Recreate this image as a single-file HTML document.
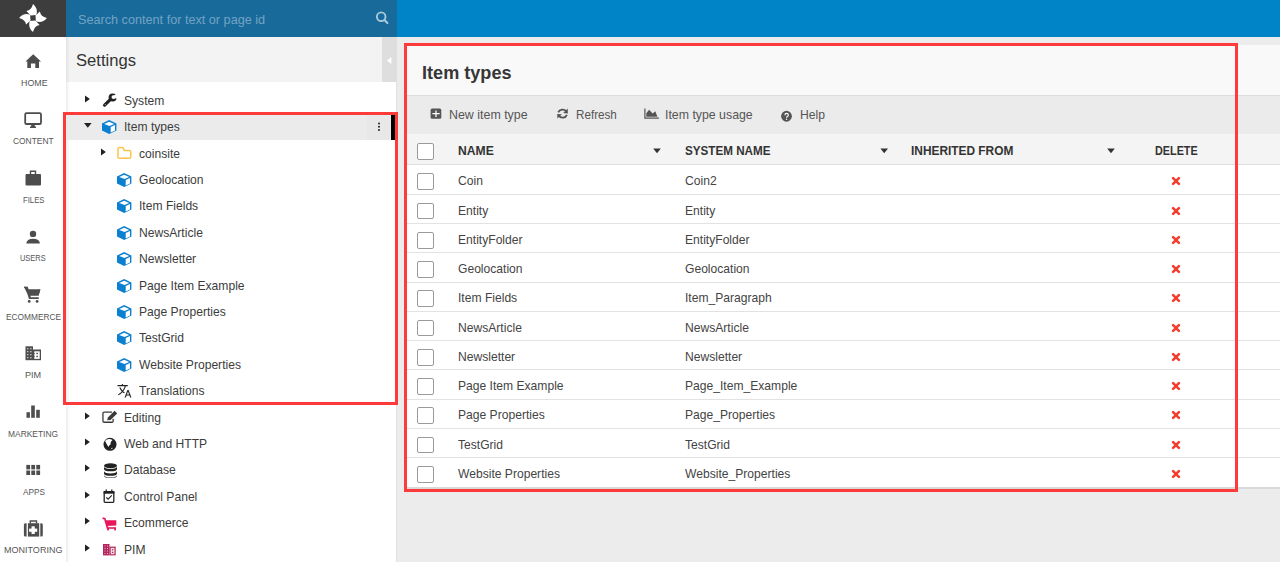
<!DOCTYPE html>
<html><head><meta charset="utf-8">
<style>
*{margin:0;padding:0;box-sizing:border-box}
html,body{width:1280px;height:562px;overflow:hidden;background:#ececec;font-family:"Liberation Sans",sans-serif;color:#333}
.a{position:absolute}
.t{position:absolute;white-space:nowrap;line-height:1}
svg{position:absolute;overflow:visible}
</style></head><body>
<div class="a" style="left:0px;top:0px;width:66px;height:37px;background:#3d3d3d;"></div>
<div class="a" style="left:66px;top:0px;width:331px;height:37px;background:#186a9b;"></div>
<div class="a" style="left:397px;top:0px;width:883px;height:37px;background:#0084c8;"></div>
<div class="t" style="left:78.40px;top:13.43px;font-size:13.2px;color:#73a3c3;transform-origin:0 0;transform:scaleX(0.9595);">Search content for text or page id</div>
<svg width="1" height="1" style="left:33px;top:17.6px"><g fill="#fff" transform="rotate(0)"><path d="M-6.6,-6.9 Q-1.6,-7.6 0,-13.9 Q5.4,-9.6 3.3,-2.9 L-2.4,-2.5 Z" transform="rotate(0)"/><path d="M-6.6,-6.9 Q-1.6,-7.6 0,-13.9 Q5.4,-9.6 3.3,-2.9 L-2.4,-2.5 Z" transform="rotate(90)"/><path d="M-6.6,-6.9 Q-1.6,-7.6 0,-13.9 Q5.4,-9.6 3.3,-2.9 L-2.4,-2.5 Z" transform="rotate(180)"/><path d="M-6.6,-6.9 Q-1.6,-7.6 0,-13.9 Q5.4,-9.6 3.3,-2.9 L-2.4,-2.5 Z" transform="rotate(270)"/></g></svg>
<svg width="1" height="1" style="left:0;top:0"><circle cx="381.2" cy="16.7" r="4.3" fill="none" stroke="#a9c8dc" stroke-width="1.9"/><path d="M384.5,20 L387.4,22.9" stroke="#a9c8dc" stroke-width="2.1" stroke-linecap="round"/></svg>
<div class="a" style="left:0px;top:37px;width:66px;height:525px;background:#fff;"></div>
<div class="t" style="left:20.60px;top:77.74px;font-size:9.4px;color:#555;transform-origin:0 0;transform:scaleX(0.9433);">HOME</div>
<div class="t" style="left:13.10px;top:136.20px;font-size:9.4px;color:#555;transform-origin:0 0;transform:scaleX(0.8977);">CONTENT</div>
<div class="t" style="left:23.10px;top:194.66px;font-size:9.4px;color:#555;transform-origin:0 0;transform:scaleX(0.8238);">FILES</div>
<div class="t" style="left:20.40px;top:253.12px;font-size:9.4px;color:#555;transform-origin:0 0;transform:scaleX(0.7932);">USERS</div>
<div class="t" style="left:6.10px;top:311.58px;font-size:9.4px;color:#555;transform-origin:0 0;transform:scaleX(0.8882);">ECOMMERCE</div>
<div class="t" style="left:25.00px;top:370.04px;font-size:9.4px;color:#555;transform-origin:0 0;transform:scaleX(0.9701);">PIM</div>
<div class="t" style="left:8.00px;top:428.50px;font-size:9.4px;color:#555;transform-origin:0 0;transform:scaleX(0.8980);">MARKETING</div>
<div class="t" style="left:22.70px;top:486.96px;font-size:9.4px;color:#555;transform-origin:0 0;transform:scaleX(0.8805);">APPS</div>
<div class="t" style="left:4.40px;top:545.42px;font-size:9.4px;color:#555;transform-origin:0 0;transform:scaleX(0.9614);">MONITORING</div>
<svg width="1" height="1" style="left:0;top:0"><path d="M33.2,54.3 L41,61.6 L39,61.6 L39,68 L35.3,68 L35.3,63.5 L30.9,63.5 L30.9,68 L27.3,68 L27.3,61.6 L25.5,61.6 Z" fill="#4d4d4d"/></svg>
<svg width="1" height="1" style="left:0;top:0"><rect x="25.2" y="113.1" width="15.8" height="10.9" rx="1.3" fill="none" stroke="#4d4d4d" stroke-width="1.8"/><path d="M31.2,124.5 L34.8,124.5 L34.8,126.6 L36,126.6 L36,128 L30,128 L30,126.6 L31.2,126.6 Z" fill="#4d4d4d"/></svg>
<svg width="1" height="1" style="left:0;top:0"><rect x="25.5" y="174" width="15.5" height="11.6" rx="1" fill="#4d4d4d"/><path d="M30.5,174.5 L30.5,171.2 L35.5,171.2 L35.5,174.5" fill="none" stroke="#4d4d4d" stroke-width="1.4"/></svg>
<svg width="1" height="1" style="left:0;top:0"><circle cx="33" cy="233.9" r="3.2" fill="#4d4d4d"/><path d="M26.3,243.6 Q26.6,238.8 33.1,238.8 Q39.6,238.8 39.9,243.6 Z" fill="#4d4d4d"/></svg>
<svg width="1" height="1" style="left:0;top:0"><path d="M24.1,287 L27.2,287.4 L28.6,292 L40.4,289.4 L38.6,295.6 L29.6,295.6 L30.2,297.3 L38.8,297.3 L38.8,299 L29,299 L27.4,294 Z" fill="#4d4d4d"/><path d="M24.1,287.2 L27.2,287.6 L30.1,297.5" fill="none" stroke="#4d4d4d" stroke-width="1.6"/><path d="M27.6,289.3 L40.4,289.3 L38.6,295.6 L29.4,295.6 Z" fill="#4d4d4d"/><circle cx="29.2" cy="301.4" r="1.4" fill="#4d4d4d"/><circle cx="37.1" cy="301.4" r="1.4" fill="#4d4d4d"/></svg>
<svg width="1" height="1" style="left:0;top:0"><rect x="25.5" y="346.3" width="7.5" height="13.9" fill="#4d4d4d"/><rect x="33" y="349.5" width="8" height="10.7" fill="#4d4d4d"/><rect x="34.3" y="351.3" width="5.4" height="7.6" fill="#fff"/><g fill="#ccc"><rect x="27.1" y="348" width="1.3" height="1.3"/><rect x="30.2" y="348" width="1.3" height="1.3"/><rect x="27.1" y="351" width="1.3" height="1.3"/><rect x="30.2" y="351" width="1.3" height="1.3"/><rect x="27.1" y="354" width="1.3" height="1.3"/><rect x="30.2" y="354" width="1.3" height="1.3"/><rect x="27.1" y="357" width="1.3" height="1.3"/><rect x="30.2" y="357" width="1.3" height="1.3"/></g><g fill="#4d4d4d"><rect x="36.4" y="352.7" width="1.5" height="1.5"/><rect x="36.4" y="355.7" width="1.5" height="1.5"/><rect x="33" y="353" width="1.6" height="0.9"/><rect x="33" y="356" width="1.6" height="0.9"/></g></svg>
<svg width="1" height="1" style="left:0;top:0"><g fill="#4d4d4d"><rect x="26.5" y="412.2" width="3.4" height="5.6"/><rect x="31.2" y="405.5" width="3.6" height="12.3"/><rect x="36.2" y="409.8" width="3.6" height="8"/></g></svg>
<svg width="1" height="1" style="left:0;top:0"><g fill="#4d4d4d"><rect x="26.3" y="464.9" width="3.8" height="4.5"/><rect x="31.3" y="464.9" width="3.8" height="4.5"/><rect x="36.3" y="464.9" width="3.8" height="4.5"/><rect x="26.3" y="470.5" width="3.8" height="4.5"/><rect x="31.3" y="470.5" width="3.8" height="4.5"/><rect x="36.3" y="470.5" width="3.8" height="4.5"/></g></svg>
<svg width="1" height="1" style="left:0;top:0"><g fill="#4d4d4d"><path d="M26.6,523.2 L25.4,523.2 Q23.9,523.2 23.9,524.7 L23.9,535.1 Q23.9,536.6 25.4,536.6 L26.6,536.6 Z"/><path d="M40.3,523.2 L41.3,523.2 Q42.8,523.2 42.8,524.7 L42.8,535.1 Q42.8,536.6 41.3,536.6 L40.3,536.6 Z"/><rect x="27.9" y="523.2" width="11.3" height="13.4"/><path d="M29.6,523.3 L29.6,520.3 L37.2,520.3 L37.2,523.3 L35.8,523.3 L35.8,521.7 L31,521.7 L31,523.3 Z"/></g><g fill="#fff"><rect x="29.1" y="528.6" width="8.1" height="3.2"/><rect x="31.55" y="526.3" width="3.2" height="7.7"/></g></svg>
<div class="a" style="left:66px;top:37px;width:331px;height:45px;background:#f3f3f3;"></div>
<div class="a" style="left:382px;top:37px;width:15px;height:45px;background:#dedede;"></div>
<svg width="1" height="1" style="left:0;top:0"><path d="M391.4,57.1 L391.4,64.1 L386.9,60.6 Z" fill="#fff"/></svg>
<div class="a" style="left:66px;top:82px;width:330px;height:480px;background:#fff;"></div>
<div class="a" style="left:396px;top:82px;width:1px;height:480px;background:#e0e0e0;"></div>
<div class="a" style="left:66px;top:37px;width:4px;height:525px;background:linear-gradient(to right,rgba(0,0,0,0.07),rgba(0,0,0,0));"></div>
<div class="t" style="left:75.80px;top:52.47px;font-size:17.4px;color:#333;transform-origin:0 0;transform:scaleX(0.9547);">Settings</div>
<div class="a" style="left:66px;top:113.2px;width:330px;height:26.6px;background:#ebebeb;"></div>
<div class="a" style="left:367px;top:113.2px;width:24px;height:26.6px;background:#e8e8e8;"></div>
<div class="a" style="left:391px;top:113px;width:4px;height:27px;background:#000;"></div>
<svg width="1" height="1" style="left:0;top:0"><g fill="#222"><circle cx="379" cy="123.6" r="1"/><circle cx="379" cy="126.8" r="1"/><circle cx="379" cy="130" r="1"/></g></svg>
<div class="t" style="left:123.50px;top:94.86px;font-size:12.8px;color:#3c3c3c;transform-origin:0 0;transform:scaleX(0.9453);">System</div>
<svg width="1" height="1" style="left:85.4px;top:98.8px"><path d="M0,-3.6 L4.9,0 L0,3.6 Z" fill="#222"/></svg>
<svg width="1" height="1" style="left:102px;top:100.8px"><path d="M2.6,4.1 L8,-1.2" stroke="#222" stroke-width="3.2" stroke-linecap="round"/><circle cx="10.6" cy="-3.6" r="4" fill="#222"/><circle cx="11.4" cy="-3.9" r="1.9" fill="#fff"/><path d="M11.4,-5.3 L15.5,-7.4 L15.5,-2.8 L11.4,-2.5 Z" fill="#fff"/><circle cx="3.3" cy="3.6" r="0.55" fill="#bbb"/></svg>
<div class="t" style="left:123.50px;top:121.26px;font-size:12.8px;color:#3c3c3c;transform-origin:0 0;transform:scaleX(0.9453);">Item types</div>
<svg width="1" height="1" style="left:84.4px;top:122.69999999999999px"><path d="M0,0 L7.6,0 L3.8,4.7 Z" fill="#222"/></svg>
<svg width="1" height="1" style="left:102px;top:127.19999999999999px"><g transform="translate(7.2,0)"><path d="M0,-6.9 L7.2,-3.6 L7.2,3.6 L0,6.9 L-7.2,3.6 L-7.2,-3.6 Z" fill="#0b7fd0"/><path d="M0,-5.3 L5,-3.1 L0.3,-1.1 L-5,-3.1 Z" fill="#fff"/><path d="M1.5,0 L5.8,-2 L5.8,3.4 L1.5,5.5 Z" fill="#fff"/></g></svg>
<div class="t" style="left:139.00px;top:147.66px;font-size:12.8px;color:#3c3c3c;transform-origin:0 0;transform:scaleX(0.9453);">coinsite</div>
<svg width="1" height="1" style="left:100.8px;top:151.6px"><path d="M0,-3.6 L4.9,0 L0,3.6 Z" fill="#222"/></svg>
<svg width="1" height="1" style="left:117px;top:153.6px"><path d="M0.95,-5.2 Q0.95,-6.45 2.2,-6.45 L5.2,-6.45 Q6,-6.45 6.4,-5.6 L7.1,-3.55 L12.5,-3.55 Q13.75,-3.55 13.75,-2.3 L13.75,3.1 Q13.75,4.35 12.5,4.35 L2.2,4.35 Q0.95,4.35 0.95,3.1 Z" fill="none" stroke="#fcc44a" stroke-width="1.5" stroke-linejoin="round"/></svg>
<div class="t" style="left:139.00px;top:174.06px;font-size:12.8px;color:#3c3c3c;transform-origin:0 0;transform:scaleX(0.9453);">Geolocation</div>
<svg width="1" height="1" style="left:117px;top:179.99999999999997px"><g transform="translate(7.2,0)"><path d="M0,-6.9 L7.2,-3.6 L7.2,3.6 L0,6.9 L-7.2,3.6 L-7.2,-3.6 Z" fill="#0b7fd0"/><path d="M0,-5.3 L5,-3.1 L0.3,-1.1 L-5,-3.1 Z" fill="#fff"/><path d="M1.5,0 L5.8,-2 L5.8,3.4 L1.5,5.5 Z" fill="#fff"/></g></svg>
<div class="t" style="left:139.00px;top:200.46px;font-size:12.8px;color:#3c3c3c;transform-origin:0 0;transform:scaleX(0.9453);">Item Fields</div>
<svg width="1" height="1" style="left:117px;top:206.4px"><g transform="translate(7.2,0)"><path d="M0,-6.9 L7.2,-3.6 L7.2,3.6 L0,6.9 L-7.2,3.6 L-7.2,-3.6 Z" fill="#0b7fd0"/><path d="M0,-5.3 L5,-3.1 L0.3,-1.1 L-5,-3.1 Z" fill="#fff"/><path d="M1.5,0 L5.8,-2 L5.8,3.4 L1.5,5.5 Z" fill="#fff"/></g></svg>
<div class="t" style="left:139.00px;top:226.86px;font-size:12.8px;color:#3c3c3c;transform-origin:0 0;transform:scaleX(0.9453);">NewsArticle</div>
<svg width="1" height="1" style="left:117px;top:232.79999999999998px"><g transform="translate(7.2,0)"><path d="M0,-6.9 L7.2,-3.6 L7.2,3.6 L0,6.9 L-7.2,3.6 L-7.2,-3.6 Z" fill="#0b7fd0"/><path d="M0,-5.3 L5,-3.1 L0.3,-1.1 L-5,-3.1 Z" fill="#fff"/><path d="M1.5,0 L5.8,-2 L5.8,3.4 L1.5,5.5 Z" fill="#fff"/></g></svg>
<div class="t" style="left:139.00px;top:253.26px;font-size:12.8px;color:#3c3c3c;transform-origin:0 0;transform:scaleX(0.9453);">Newsletter</div>
<svg width="1" height="1" style="left:117px;top:259.2px"><g transform="translate(7.2,0)"><path d="M0,-6.9 L7.2,-3.6 L7.2,3.6 L0,6.9 L-7.2,3.6 L-7.2,-3.6 Z" fill="#0b7fd0"/><path d="M0,-5.3 L5,-3.1 L0.3,-1.1 L-5,-3.1 Z" fill="#fff"/><path d="M1.5,0 L5.8,-2 L5.8,3.4 L1.5,5.5 Z" fill="#fff"/></g></svg>
<div class="t" style="left:139.00px;top:279.66px;font-size:12.8px;color:#3c3c3c;transform-origin:0 0;transform:scaleX(0.9453);">Page Item Example</div>
<svg width="1" height="1" style="left:117px;top:285.6px"><g transform="translate(7.2,0)"><path d="M0,-6.9 L7.2,-3.6 L7.2,3.6 L0,6.9 L-7.2,3.6 L-7.2,-3.6 Z" fill="#0b7fd0"/><path d="M0,-5.3 L5,-3.1 L0.3,-1.1 L-5,-3.1 Z" fill="#fff"/><path d="M1.5,0 L5.8,-2 L5.8,3.4 L1.5,5.5 Z" fill="#fff"/></g></svg>
<div class="t" style="left:139.00px;top:306.06px;font-size:12.8px;color:#3c3c3c;transform-origin:0 0;transform:scaleX(0.9453);">Page Properties</div>
<svg width="1" height="1" style="left:117px;top:312.0px"><g transform="translate(7.2,0)"><path d="M0,-6.9 L7.2,-3.6 L7.2,3.6 L0,6.9 L-7.2,3.6 L-7.2,-3.6 Z" fill="#0b7fd0"/><path d="M0,-5.3 L5,-3.1 L0.3,-1.1 L-5,-3.1 Z" fill="#fff"/><path d="M1.5,0 L5.8,-2 L5.8,3.4 L1.5,5.5 Z" fill="#fff"/></g></svg>
<div class="t" style="left:139.00px;top:332.46px;font-size:12.8px;color:#3c3c3c;transform-origin:0 0;transform:scaleX(0.9453);">TestGrid</div>
<svg width="1" height="1" style="left:117px;top:338.40000000000003px"><g transform="translate(7.2,0)"><path d="M0,-6.9 L7.2,-3.6 L7.2,3.6 L0,6.9 L-7.2,3.6 L-7.2,-3.6 Z" fill="#0b7fd0"/><path d="M0,-5.3 L5,-3.1 L0.3,-1.1 L-5,-3.1 Z" fill="#fff"/><path d="M1.5,0 L5.8,-2 L5.8,3.4 L1.5,5.5 Z" fill="#fff"/></g></svg>
<div class="t" style="left:139.00px;top:358.86px;font-size:12.8px;color:#3c3c3c;transform-origin:0 0;transform:scaleX(0.9453);">Website Properties</div>
<svg width="1" height="1" style="left:117px;top:364.8px"><g transform="translate(7.2,0)"><path d="M0,-6.9 L7.2,-3.6 L7.2,3.6 L0,6.9 L-7.2,3.6 L-7.2,-3.6 Z" fill="#0b7fd0"/><path d="M0,-5.3 L5,-3.1 L0.3,-1.1 L-5,-3.1 Z" fill="#fff"/><path d="M1.5,0 L5.8,-2 L5.8,3.4 L1.5,5.5 Z" fill="#fff"/></g></svg>
<div class="t" style="left:139.00px;top:385.26px;font-size:12.8px;color:#3c3c3c;transform-origin:0 0;transform:scaleX(0.9453);">Translations</div>
<svg width="1" height="1" style="left:117px;top:391.2px"><path d="M0.5,-5.4 L10.8,-5.4 M5.4,-7 L5.4,-5.4 M8.6,-5.4 Q6.5,1 1.3,3.8 M2.8,-3.5 Q5,1 7.5,1.8" fill="none" stroke="#222" stroke-width="1.1"/><path d="M7.6,6.4 L10.4,-0.9 L11.6,-0.9 L14.4,6.4 L13.1,6.4 L12.5,4.6 L9.5,4.6 L8.9,6.4 Z M9.9,3.5 L12.1,3.5 L11,0.6 Z" fill="#222" fill-rule="evenodd"/></svg>
<div class="t" style="left:123.50px;top:411.66px;font-size:12.8px;color:#3c3c3c;transform-origin:0 0;transform:scaleX(0.9453);">Editing</div>
<svg width="1" height="1" style="left:85.4px;top:415.59999999999997px"><path d="M0,-3.6 L4.9,0 L0,3.6 Z" fill="#222"/></svg>
<svg width="1" height="1" style="left:102px;top:417.59999999999997px"><path d="M10,-5.95 L2.2,-5.95 Q0.95,-5.95 0.95,-4.7 L0.95,3 Q0.95,4.25 2.2,4.25 L9.9,4.25 Q11.15,4.25 11.15,3 L11.15,0.8" fill="none" stroke="#3a3a3a" stroke-width="1.3"/><path d="M5.2,2.3 L5.9,-0.5 L12.6,-7.2 L15.2,-4.6 L8.5,2.1 Z" fill="#3a3a3a"/></svg>
<div class="t" style="left:123.50px;top:438.06px;font-size:12.8px;color:#3c3c3c;transform-origin:0 0;transform:scaleX(0.9453);">Web and HTTP</div>
<svg width="1" height="1" style="left:85.4px;top:442.0px"><path d="M0,-3.6 L4.9,0 L0,3.6 Z" fill="#222"/></svg>
<svg width="1" height="1" style="left:102px;top:444.0px"><circle cx="8" cy="0.3" r="6.5" fill="#222"/><path d="M3,-3 Q5,-5.5 8,-5 Q9.5,-4.5 10.5,-4 L8.8,-2 L8.5,0.5 L7.2,1.5 L6.5,3 Q5,1 3,-3 Z" fill="#fff"/><path d="M9,4.5 L10.4,3.6 L10.2,5.2 Z" fill="#fff"/></svg>
<div class="t" style="left:123.50px;top:464.46px;font-size:12.8px;color:#3c3c3c;transform-origin:0 0;transform:scaleX(0.9453);">Database</div>
<svg width="1" height="1" style="left:85.4px;top:468.4px"><path d="M0,-3.6 L4.9,0 L0,3.6 Z" fill="#222"/></svg>
<svg width="1" height="1" style="left:102px;top:470.4px"><g fill="#222"><ellipse cx="8.5" cy="-4.3" rx="6.5" ry="2.5"/><path d="M2,-3.6 Q2,-1.3 8.5,-1.1 Q15,-1.3 15,-3.6 L15,-1 Q15,1.3 8.5,1.3 Q2,1.3 2,-1 Z"/><path d="M2,0.9 Q2,3.2 8.5,3.4 Q15,3.2 15,0.9 L15,3.4 Q15,5.7 8.5,5.7 Q2,5.7 2,3.4 Z"/><path d="M2,5 Q2,7.3 8.5,7.5 Q15,7.3 15,5 L15,5.8 Q15,8 8.5,8 Q2,8 2,5.8 Z"/></g></svg>
<div class="t" style="left:123.50px;top:490.86px;font-size:12.8px;color:#3c3c3c;transform-origin:0 0;transform:scaleX(0.9453);">Control Panel</div>
<svg width="1" height="1" style="left:85.4px;top:494.8px"><path d="M0,-3.6 L4.9,0 L0,3.6 Z" fill="#222"/></svg>
<svg width="1" height="1" style="left:102px;top:495.8px"><rect x="2.2" y="-4.3" width="9.6" height="10.6" rx="0.8" fill="none" stroke="#222" stroke-width="1.3"/><rect x="1.6" y="-4.9" width="10.8" height="2.6" fill="#222"/><rect x="3.6" y="-6.6" width="1.2" height="2" fill="#222"/><rect x="9.2" y="-6.6" width="1.2" height="2" fill="#222"/><path d="M4.2,1.4 L6.1,3.2 L9.8,-0.6" fill="none" stroke="#222" stroke-width="1.1"/></svg>
<div class="t" style="left:123.50px;top:517.26px;font-size:12.8px;color:#3c3c3c;transform-origin:0 0;transform:scaleX(0.9453);">Ecommerce</div>
<svg width="1" height="1" style="left:85.4px;top:521.2px"><path d="M0,-3.6 L4.9,0 L0,3.6 Z" fill="#222"/></svg>
<svg width="1" height="1" style="left:102px;top:523.8000000000001px"><path d="M0.6,-5.8 L2.8,-5.3 L5.7,4.8" fill="none" stroke="#e8175d" stroke-width="1.7"/><path d="M3.5,-3.8 L14.3,-3.8 L14.3,1.6 L5,2.1 Z" fill="#e8175d"/><path d="M5.5,4 L14,4" stroke="#e8175d" stroke-width="1.6"/><rect x="5.2" y="4" width="1.8" height="2.4" fill="#e8175d"/><rect x="12.2" y="4" width="1.8" height="2.4" fill="#e8175d"/></svg>
<div class="t" style="left:123.50px;top:543.66px;font-size:12.8px;color:#3c3c3c;transform-origin:0 0;transform:scaleX(0.9453);">PIM</div>
<svg width="1" height="1" style="left:85.4px;top:547.6px"><path d="M0,-3.6 L4.9,0 L0,3.6 Z" fill="#222"/></svg>
<svg width="1" height="1" style="left:102px;top:549.6px"><rect x="1" y="-6" width="6.5" height="11.4" fill="#b4255b"/><rect x="7.5" y="-3.4" width="6.2" height="8.8" fill="#b4255b"/><rect x="8.7" y="-2.2" width="3.8" height="6.5" fill="#f3dbe4"/><g fill="#e9b9cb"><rect x="2.5" y="-4.5" width="1" height="1"/><rect x="5" y="-4.5" width="1" height="1"/><rect x="2.5" y="-2" width="1" height="1"/><rect x="5" y="-2" width="1" height="1"/><rect x="2.5" y="0.5" width="1" height="1"/><rect x="5" y="0.5" width="1" height="1"/><rect x="2.5" y="3" width="1" height="1"/><rect x="5" y="3" width="1" height="1"/></g><g fill="#b4255b"><rect x="10" y="-0.8" width="1.2" height="1.2"/><rect x="10" y="1.8" width="1.2" height="1.2"/></g></svg>
<div class="a" style="left:406px;top:45px;width:874px;height:50px;background:#f9f9f9;"></div>
<div class="a" style="left:406px;top:95px;width:874px;height:38.5px;background:#ebebeb;border-top:1px solid #dcdcdc"></div>
<div class="a" style="left:406px;top:133.5px;width:874px;height:31.2px;background:#f4f4f4;border-bottom:1px solid #dedede"></div>
<div class="t" style="left:422.40px;top:63.35px;font-size:19.2px;color:#363636;font-weight:bold;transform-origin:0 0;transform:scaleX(0.9437);">Item types</div>
<div class="t" style="left:449.40px;top:108.30px;font-size:13px;color:#555;transform-origin:0 0;transform:scaleX(0.9545);">New item type</div>
<div class="t" style="left:576.10px;top:108.30px;font-size:13px;color:#555;transform-origin:0 0;transform:scaleX(0.8967);">Refresh</div>
<div class="t" style="left:664.50px;top:108.30px;font-size:13px;color:#555;transform-origin:0 0;transform:scaleX(0.9481);">Item type usage</div>
<div class="t" style="left:799.70px;top:108.30px;font-size:13px;color:#555;transform-origin:0 0;transform:scaleX(0.9346);">Help</div>
<svg width="1" height="1" style="left:0;top:0"><rect x="430.6" y="108.5" width="10.7" height="10.3" rx="1.6" fill="#555"/><path d="M436,110.4 L436,117.1 M432.4,113.7 L439.7,113.7" stroke="#fff" stroke-width="1.25"/></svg>
<svg width="1" height="1" style="left:0;top:0"><path d="M558.2,112.4 A4.6,4.2 0 0 1 566.3,111.5" fill="none" stroke="#555" stroke-width="1.8"/><path d="M567.7,108.6 L567.9,113.4 L563.2,113.1 Z" fill="#555"/><path d="M566.9,114.9 A4.6,4.2 0 0 1 558.8,115.8" fill="none" stroke="#555" stroke-width="1.8"/><path d="M557.4,118.5 L557.2,113.9 L561.9,114.2 Z" fill="#555"/></svg>
<svg width="1" height="1" style="left:0;top:0"><path d="M644.9,108.4 L644.9,118.1 L658.9,118.1" fill="none" stroke="#555" stroke-width="1.2"/><path d="M646.3,116.8 L646.3,113.3 L649.1,109.7 L652.7,113.5 L655.3,111.2 L657.4,116.8 Z" fill="#555"/></svg>
<svg width="1" height="1" style="left:0;top:0"><circle cx="786.5" cy="116.25" r="5.4" fill="#555"/><path d="M784.9,115.2 Q784.9,113.4 786.6,113.4 Q788.3,113.4 788.3,114.9 Q788.3,115.9 787.3,116.4 Q786.6,116.8 786.6,117.7" fill="none" stroke="#fff" stroke-width="1.15"/><circle cx="786.6" cy="119.3" r="0.7" fill="#fff"/></svg>
<div class="t" style="left:457.60px;top:144.78px;font-size:12.9px;color:#333;font-weight:bold;transform-origin:0 0;transform:scaleX(0.9421);">NAME</div>
<div class="t" style="left:684.70px;top:144.78px;font-size:12.9px;color:#333;font-weight:bold;transform-origin:0 0;transform:scaleX(0.9038);">SYSTEM NAME</div>
<div class="t" style="left:911.30px;top:144.78px;font-size:12.9px;color:#333;font-weight:bold;transform-origin:0 0;transform:scaleX(0.9217);">INHERITED FROM</div>
<div class="t" style="left:1154.80px;top:144.78px;font-size:12.9px;color:#333;font-weight:bold;transform-origin:0 0;transform:scaleX(0.8389);">DELETE</div>
<svg width="1" height="1" style="left:0;top:0"><path d="M653.2,148.4 L660.8000000000001,148.4 L657.0,153.2 Z" fill="#333"/></svg>
<svg width="1" height="1" style="left:0;top:0"><path d="M880.4,148.4 L888.0,148.4 L884.1999999999999,153.2 Z" fill="#333"/></svg>
<svg width="1" height="1" style="left:0;top:0"><path d="M1107.2,148.4 L1114.8,148.4 L1111.0,153.2 Z" fill="#333"/></svg>
<div class="a" style="left:417.3px;top:142.90px;width:16.6px;height:16.8px;border:1px solid #9a9a9a;border-radius:2px;background:#fff"></div>
<div class="a" style="left:406px;top:165px;width:874px;height:322px;background:#fff;"></div>
<div class="a" style="left:406px;top:193.90px;width:874px;height:1px;background:#e2e2e2;"></div>
<div class="a" style="left:417.3px;top:173.40px;width:16.6px;height:16.8px;border:1px solid #9a9a9a;border-radius:2px;background:#fff"></div>
<div class="t" style="left:457.60px;top:175.46px;font-size:12.8px;color:#444;transform-origin:0 0;transform:scaleX(0.9453);">Coin</div>
<div class="t" style="left:684.70px;top:175.46px;font-size:12.8px;color:#444;transform-origin:0 0;transform:scaleX(0.9453);">Coin2</div>
<svg width="1" height="1" style="left:1176.2px;top:181.30px"><path d="M-2.9,-2.9 L2.9,2.9 M2.9,-2.9 L-2.9,2.9" stroke="#f33d2f" stroke-width="2.6" stroke-linecap="round"/></svg>
<div class="a" style="left:406px;top:223.15px;width:874px;height:1px;background:#e2e2e2;"></div>
<div class="a" style="left:417.3px;top:202.65px;width:16.6px;height:16.8px;border:1px solid #9a9a9a;border-radius:2px;background:#fff"></div>
<div class="t" style="left:457.60px;top:204.71px;font-size:12.8px;color:#444;transform-origin:0 0;transform:scaleX(0.9453);">Entity</div>
<div class="t" style="left:684.70px;top:204.71px;font-size:12.8px;color:#444;transform-origin:0 0;transform:scaleX(0.9453);">Entity</div>
<svg width="1" height="1" style="left:1176.2px;top:210.55px"><path d="M-2.9,-2.9 L2.9,2.9 M2.9,-2.9 L-2.9,2.9" stroke="#f33d2f" stroke-width="2.6" stroke-linecap="round"/></svg>
<div class="a" style="left:406px;top:252.40px;width:874px;height:1px;background:#e2e2e2;"></div>
<div class="a" style="left:417.3px;top:231.90px;width:16.6px;height:16.8px;border:1px solid #9a9a9a;border-radius:2px;background:#fff"></div>
<div class="t" style="left:457.60px;top:233.96px;font-size:12.8px;color:#444;transform-origin:0 0;transform:scaleX(0.9453);">EntityFolder</div>
<div class="t" style="left:684.70px;top:233.96px;font-size:12.8px;color:#444;transform-origin:0 0;transform:scaleX(0.9453);">EntityFolder</div>
<svg width="1" height="1" style="left:1176.2px;top:239.80px"><path d="M-2.9,-2.9 L2.9,2.9 M2.9,-2.9 L-2.9,2.9" stroke="#f33d2f" stroke-width="2.6" stroke-linecap="round"/></svg>
<div class="a" style="left:406px;top:281.65px;width:874px;height:1px;background:#e2e2e2;"></div>
<div class="a" style="left:417.3px;top:261.15px;width:16.6px;height:16.8px;border:1px solid #9a9a9a;border-radius:2px;background:#fff"></div>
<div class="t" style="left:457.60px;top:263.21px;font-size:12.8px;color:#444;transform-origin:0 0;transform:scaleX(0.9453);">Geolocation</div>
<div class="t" style="left:684.70px;top:263.21px;font-size:12.8px;color:#444;transform-origin:0 0;transform:scaleX(0.9453);">Geolocation</div>
<svg width="1" height="1" style="left:1176.2px;top:269.05px"><path d="M-2.9,-2.9 L2.9,2.9 M2.9,-2.9 L-2.9,2.9" stroke="#f33d2f" stroke-width="2.6" stroke-linecap="round"/></svg>
<div class="a" style="left:406px;top:310.90px;width:874px;height:1px;background:#e2e2e2;"></div>
<div class="a" style="left:417.3px;top:290.40px;width:16.6px;height:16.8px;border:1px solid #9a9a9a;border-radius:2px;background:#fff"></div>
<div class="t" style="left:457.60px;top:292.46px;font-size:12.8px;color:#444;transform-origin:0 0;transform:scaleX(0.9453);">Item Fields</div>
<div class="t" style="left:684.70px;top:292.46px;font-size:12.8px;color:#444;transform-origin:0 0;transform:scaleX(0.9453);">Item_Paragraph</div>
<svg width="1" height="1" style="left:1176.2px;top:298.30px"><path d="M-2.9,-2.9 L2.9,2.9 M2.9,-2.9 L-2.9,2.9" stroke="#f33d2f" stroke-width="2.6" stroke-linecap="round"/></svg>
<div class="a" style="left:406px;top:340.15px;width:874px;height:1px;background:#e2e2e2;"></div>
<div class="a" style="left:417.3px;top:319.65px;width:16.6px;height:16.8px;border:1px solid #9a9a9a;border-radius:2px;background:#fff"></div>
<div class="t" style="left:457.60px;top:321.71px;font-size:12.8px;color:#444;transform-origin:0 0;transform:scaleX(0.9453);">NewsArticle</div>
<div class="t" style="left:684.70px;top:321.71px;font-size:12.8px;color:#444;transform-origin:0 0;transform:scaleX(0.9453);">NewsArticle</div>
<svg width="1" height="1" style="left:1176.2px;top:327.55px"><path d="M-2.9,-2.9 L2.9,2.9 M2.9,-2.9 L-2.9,2.9" stroke="#f33d2f" stroke-width="2.6" stroke-linecap="round"/></svg>
<div class="a" style="left:406px;top:369.40px;width:874px;height:1px;background:#e2e2e2;"></div>
<div class="a" style="left:417.3px;top:348.90px;width:16.6px;height:16.8px;border:1px solid #9a9a9a;border-radius:2px;background:#fff"></div>
<div class="t" style="left:457.60px;top:350.96px;font-size:12.8px;color:#444;transform-origin:0 0;transform:scaleX(0.9453);">Newsletter</div>
<div class="t" style="left:684.70px;top:350.96px;font-size:12.8px;color:#444;transform-origin:0 0;transform:scaleX(0.9453);">Newsletter</div>
<svg width="1" height="1" style="left:1176.2px;top:356.80px"><path d="M-2.9,-2.9 L2.9,2.9 M2.9,-2.9 L-2.9,2.9" stroke="#f33d2f" stroke-width="2.6" stroke-linecap="round"/></svg>
<div class="a" style="left:406px;top:398.65px;width:874px;height:1px;background:#e2e2e2;"></div>
<div class="a" style="left:417.3px;top:378.15px;width:16.6px;height:16.8px;border:1px solid #9a9a9a;border-radius:2px;background:#fff"></div>
<div class="t" style="left:457.60px;top:380.21px;font-size:12.8px;color:#444;transform-origin:0 0;transform:scaleX(0.9453);">Page Item Example</div>
<div class="t" style="left:684.70px;top:380.21px;font-size:12.8px;color:#444;transform-origin:0 0;transform:scaleX(0.9453);">Page_Item_Example</div>
<svg width="1" height="1" style="left:1176.2px;top:386.05px"><path d="M-2.9,-2.9 L2.9,2.9 M2.9,-2.9 L-2.9,2.9" stroke="#f33d2f" stroke-width="2.6" stroke-linecap="round"/></svg>
<div class="a" style="left:406px;top:427.90px;width:874px;height:1px;background:#e2e2e2;"></div>
<div class="a" style="left:417.3px;top:407.40px;width:16.6px;height:16.8px;border:1px solid #9a9a9a;border-radius:2px;background:#fff"></div>
<div class="t" style="left:457.60px;top:409.46px;font-size:12.8px;color:#444;transform-origin:0 0;transform:scaleX(0.9453);">Page Properties</div>
<div class="t" style="left:684.70px;top:409.46px;font-size:12.8px;color:#444;transform-origin:0 0;transform:scaleX(0.9453);">Page_Properties</div>
<svg width="1" height="1" style="left:1176.2px;top:415.30px"><path d="M-2.9,-2.9 L2.9,2.9 M2.9,-2.9 L-2.9,2.9" stroke="#f33d2f" stroke-width="2.6" stroke-linecap="round"/></svg>
<div class="a" style="left:406px;top:457.15px;width:874px;height:1px;background:#e2e2e2;"></div>
<div class="a" style="left:417.3px;top:436.65px;width:16.6px;height:16.8px;border:1px solid #9a9a9a;border-radius:2px;background:#fff"></div>
<div class="t" style="left:457.60px;top:438.71px;font-size:12.8px;color:#444;transform-origin:0 0;transform:scaleX(0.9453);">TestGrid</div>
<div class="t" style="left:684.70px;top:438.71px;font-size:12.8px;color:#444;transform-origin:0 0;transform:scaleX(0.9453);">TestGrid</div>
<svg width="1" height="1" style="left:1176.2px;top:444.55px"><path d="M-2.9,-2.9 L2.9,2.9 M2.9,-2.9 L-2.9,2.9" stroke="#f33d2f" stroke-width="2.6" stroke-linecap="round"/></svg>
<div class="a" style="left:417.3px;top:465.90px;width:16.6px;height:16.8px;border:1px solid #9a9a9a;border-radius:2px;background:#fff"></div>
<div class="t" style="left:457.60px;top:467.96px;font-size:12.8px;color:#444;transform-origin:0 0;transform:scaleX(0.9453);">Website Properties</div>
<div class="t" style="left:684.70px;top:467.96px;font-size:12.8px;color:#444;transform-origin:0 0;transform:scaleX(0.9453);">Website_Properties</div>
<svg width="1" height="1" style="left:1176.2px;top:473.80px"><path d="M-2.9,-2.9 L2.9,2.9 M2.9,-2.9 L-2.9,2.9" stroke="#f33d2f" stroke-width="2.6" stroke-linecap="round"/></svg>
<div class="a" style="left:406px;top:487px;width:874px;height:1.6px;background:#d9d9d9;"></div>
<div class="a" style="left:63px;top:112px;width:335px;height:293px;background:transparent;border:3px solid #fe3b3b"></div>
<div class="a" style="left:404px;top:43px;width:834px;height:449px;background:transparent;border:3px solid #fe3b3b"></div>
</body></html>
